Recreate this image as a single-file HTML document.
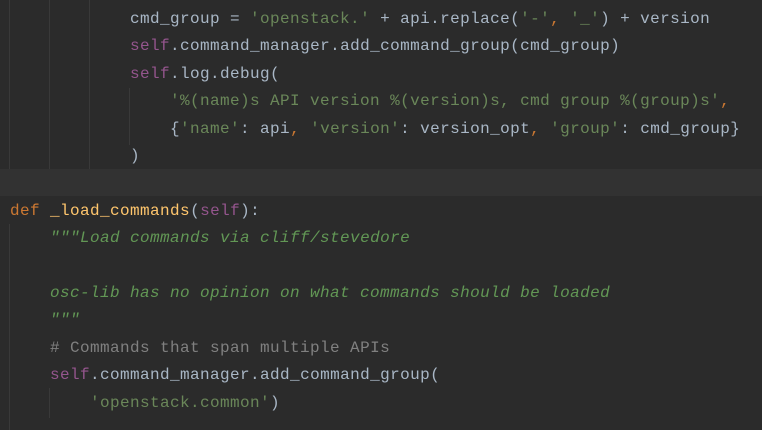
<!DOCTYPE html>
<html><head><style>
body{margin:0;background:#2b2b2b;width:762px;height:430px;overflow:hidden;position:relative}
.c{position:absolute;left:10px;top:6px;font-family:"Liberation Mono",monospace;font-size:16px;letter-spacing:0.4px;line-height:27.4px;color:#a9b7c6;white-space:pre}
.hl{position:absolute;left:0;top:169px;width:762px;height:27px;background:#323232}
.g{position:absolute;width:1px;background:#393939}
.k{color:#cc7832}.s{color:#6a8759}.f{color:#94558d}.d{color:#629755;font-style:italic}.m{color:#808080}.n{color:#ffc66d}
</style></head><body>
<div class="hl"></div>
<div class="g" style="left:9px;top:0;height:169px"></div>
<div class="g" style="left:49px;top:0;height:169px"></div>
<div class="g" style="left:89px;top:0;height:169px"></div>
<div class="g" style="left:129px;top:88px;height:57px"></div>
<div class="g" style="left:9px;top:224px;height:206px"></div>
<div class="g" style="left:49px;top:388px;height:30px"></div>
<div class="c">            cmd_group = <span class="s">'openstack.'</span> + api.replace(<span class="s">'-'</span><span class="k">,</span> <span class="s">'_'</span>) + version
            <span class="f">self</span>.command_manager.add_command_group(cmd_group)
            <span class="f">self</span>.log.debug(
                <span class="s">'%(name)s API version %(version)s, cmd group %(group)s'</span><span class="k">,</span>
                {<span class="s">'name'</span>: api<span class="k">,</span> <span class="s">'version'</span>: version_opt<span class="k">,</span> <span class="s">'group'</span>: cmd_group}
            )

<span class="k">def</span> <span class="n">_load_commands</span>(<span class="f">self</span>):
    <span class="d">"""Load commands via cliff/stevedore</span>

<span class="d">    osc-lib has no opinion on what commands should be loaded</span>
<span class="d">    """</span>
    <span class="m"># Commands that span multiple APIs</span>
    <span class="f">self</span>.command_manager.add_command_group(
        <span class="s">'openstack.common'</span>)
</div>
</body></html>
